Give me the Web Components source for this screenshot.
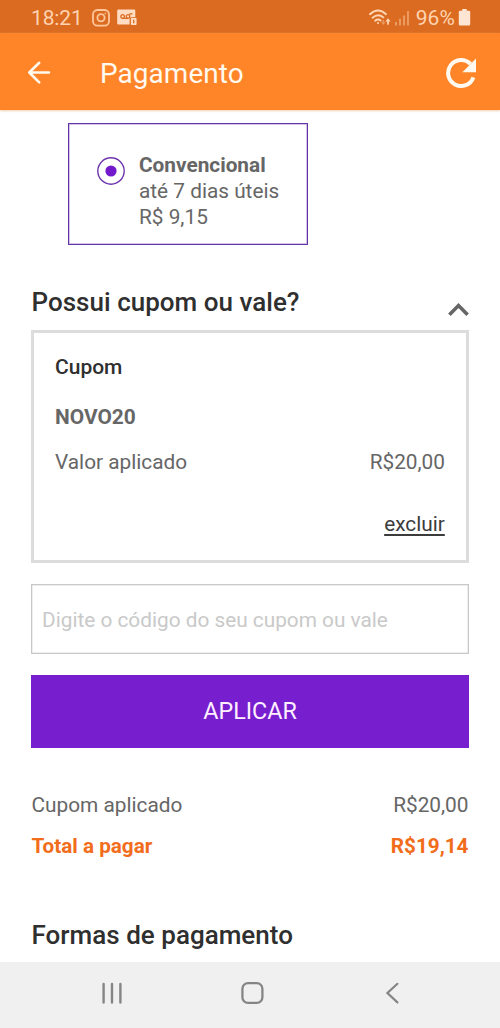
<!DOCTYPE html>
<html lang="pt-BR">
<head>
<meta charset="utf-8">
<title>Pagamento</title>
<style>
html,body{margin:0;height:100%}
body{font-family:Roboto,sans-serif;font-size:20.8px;line-height:24px;color:#666;background:#fff;overflow:hidden}
</style>
</head>
<body>
<payment-screen></payment-screen>
<script>
const define=(name,html)=>{
  const t=document.createElement('template');
  t.innerHTML=html;
  customElements.define(name,class extends HTMLElement{
    constructor(){super();this.attachShadow({mode:'open'}).append(t.content.cloneNode(true));}
  });
};

define('status-bar',`<style>
:host{display:flex;align-items:center;height:33px;box-sizing:border-box;padding:2px 29px 0 31px;background:#db6b20;color:#ffd3b0;font-size:21px;line-height:30px}
svg{display:block;flex:none}
.time{width:61px;letter-spacing:-.12px}
.mail{margin-left:7px}
.wifi{margin-left:auto}
.signal{margin-left:3px}
.level{margin-left:6px;letter-spacing:.1px}
.battery{margin-left:3px}
</style>
<span class="time">18:21</span>
<svg width="18" height="18" viewBox="0 0 18 18" fill="none" stroke="#ffc79c" stroke-width="1.8"><rect x="1" y="1" width="16" height="15.6" rx="4.4"/><circle cx="9" cy="8.8" r="3.6"/><circle cx="13.3" cy="4.5" r=".5" stroke-width="1"/></svg>
<svg class="mail" width="21" height="18" viewBox="0 0 21 18"><path d="M1.2 .6H17.3Q18.3 .6 18.3 1.6V8.2H14.2Q12.6 8.2 12.6 9.8V15.6H1.2Q.2 15.6.2 14.6V1.6Q.2 .6 1.2 .6Z" fill="#ffdcc2"/><g fill="none" stroke="#db6b20" stroke-width="1.3"><circle cx="5.6" cy="7.5" r="1.8"/><circle cx="11" cy="7.5" r="1.8"/><path d="M5.6 9.4H11M13 5.8V4.8H15.5"/></g><rect x="13.9" y="9" width="5.7" height="7" rx=".8" fill="#ffdcc2"/><path d="M16.7 10.8V14.2" stroke="#db6b20" stroke-width="1.3"/></svg>
<svg class="wifi" width="23" height="18" viewBox="0 0 23 18" fill="none" stroke="#ffd6b5" stroke-width="1.9" stroke-linecap="round"><path d="M2 5.2Q10 -2 18 5.2M4.6 8.7Q10 3.8 15.4 8.4M7.2 11.7Q10 9.4 12.6 11.5"/><circle cx="10" cy="14" r="1" fill="#ffd6b5" stroke="none"/><path d="M20 15V11.8" stroke-width="1.7"/><path d="M17.3 12.6 20 9.2 22.7 12.6Z" fill="#ffd6b5" stroke="none"/><path d="M15.3 11.5V14" stroke="#e99a62" stroke-width="1.3"/><path d="M13 13.3H17.5L15.3 16Z" fill="#e99a62" stroke="none"/></svg>
<svg class="signal" width="16" height="18" viewBox="0 0 16 18" fill="#eb9a62"><path d="M1 13h2v3.5H1zM5 9.8h2v6.7H5zM9 6.4h2v10.1H9zM13 2h2v14.5h-2z"/></svg>
<span class="level">96%</span>
<svg class="battery" width="13" height="18" viewBox="0 0 13 18"><path d="M4.2 0H8.7V1.7H11Q12.2 1.7 12.2 2.9V15.3Q12.2 16.5 11 16.5H2Q.8 16.5 .8 15.3V2.9Q.8 1.7 2 1.7H4.2Z" fill="#ffe6d4"/></svg>`);

define('app-bar',`<style>
:host{display:flex;align-items:center;height:77px;box-sizing:border-box;padding:2px 23px 0 27px;background:#ff8528;color:#fff9ef;box-shadow:0 1px 2px #f3cfae;position:relative}
svg{display:block;flex:none}
h1{margin:0 auto 0 49px;font-size:27.9px;font-weight:400;line-height:34px;padding-top:2px;letter-spacing:.1px}
</style>
<svg width="24" height="24" viewBox="0 0 24 24" fill="none" stroke="#fff9ef" stroke-width="2.6" stroke-linecap="round" stroke-linejoin="round"><path d="M22 11.5H2.5M12.2 1.8 2.3 11.5 12.2 21.4"/></svg>
<h1><slot></slot></h1>
<svg width="32" height="32" viewBox="0 0 32 32"><path d="M28.4 20.3A13 13 0 1 1 25.5 7" fill="none" stroke="#fff9ef" stroke-width="4"/><path d="M31 1.6V15.2H17.4Z" fill="#fff9ef"/></svg>`);

define('shipping-option',`<style>
:host{display:flex;width:240px;height:122px;box-sizing:border-box;border:1px solid #6232a6;box-shadow:inset 0 0 0 .5px #a98cd0;padding:28px 0 0 28px;line-height:26px}
svg{display:block;flex:none;margin:5px 14px 0 0}
</style>
<svg width="28" height="28" viewBox="0 0 28 28"><circle cx="14" cy="14" r="13.2" fill="none" stroke="#6e35ad" stroke-width="1.4"/><circle cx="14" cy="14" r="5.6" fill="#7219cb"/></svg>
<div><slot></slot></div>`);

define('section-title',`<style>
:host{display:flex;justify-content:space-between;font-size:26px;font-weight:500;line-height:30px;color:#2f2f2f;letter-spacing:.02px}
::slotted(span){padding-left:.5px}
</style><slot></slot><slot name="action"></slot>`);

define('chevron-up',`<style>:host{display:block;margin-top:15px}svg{display:block}</style>
<svg width="21" height="15" viewBox="0 0 21 15" fill="none" stroke="#666" stroke-width="3.6"><path d="M1.4 12.8 10.5 3.6 19.6 12.8"/></svg>`);

define('amount-row',`<style>:host{display:flex;justify-content:space-between;padding:0 .5px}</style><slot></slot><slot name="value"></slot>`);

define('coupon-card',`<style>
:host{display:flex;flex-direction:column;height:233px;box-sizing:border-box;border:3px solid #dcdcdc;padding:22px 20.5px 0 20.5px}
h3{margin:0 0 26px .5px;font-size:21px;font-weight:500;line-height:24px;color:#2f2f2f}
strong{font-weight:700;font-size:20.9px;margin:0 0 21px .5px}
a{align-self:flex-end;margin:38px .7px 0 0;color:#3c3c3c;text-decoration:underline;text-decoration-thickness:1.5px;text-underline-offset:3px}
</style>
<h3>Cupom</h3><strong><slot name="code"></slot></strong><slot></slot><a>excluir</a>`);

define('coupon-field',`<style>
:host{display:flex;align-items:center;height:70px;box-sizing:border-box;border:1px solid #c8c8c8;box-shadow:inset 0 0 0 .5px #ddd;padding:2px 0 0 10px;color:#c9c9c9}
</style><slot></slot>`);

define('action-button',`<style>
:host{display:flex}
button{flex:1;height:73px;border:0;padding:0 0 2px;background:#771ecf;color:#fff0ff;font:400 23.3px/28px Roboto,sans-serif}
</style><button><slot></slot></button>`);

define('nav-bar',`<style>
:host{display:flex;align-items:center;justify-content:space-between;height:66px;box-sizing:border-box;padding:0 99px 4px 101px;background:#f0f0f0}
svg{display:block}
</style>
<svg width="22" height="24" viewBox="0 0 22 24" stroke="#858585" stroke-width="2.4" stroke-linecap="round"><path d="M2.6 3V21.5M11 3V21.5M19.4 3V21.5"/></svg>
<svg width="24" height="24" viewBox="0 0 24 24"><rect x="1.4" y="2.1" width="20" height="19.8" rx="5.6" fill="none" stroke="#858585" stroke-width="2.3"/></svg>
<svg width="18" height="24" viewBox="0 0 18 24" fill="none" stroke="#858585" stroke-width="2.2" stroke-linecap="round"><path d="M14.4 2.8 4.4 12 14.4 21.4"/></svg>`);

define('payment-screen',`<style>
:host{display:flex;flex-direction:column;height:1028px;width:500px}
main{flex:1;padding:13px 31px 0;min-height:0}
b{display:block}
shipping-option{margin-left:37px}
section-title{margin-top:42px}
coupon-card{margin-top:13px}
coupon-field{margin-top:21px}
action-button{margin:21px 0 45px}
.total{margin:17px 0 62px;color:#f26d1b;font-weight:700;font-size:20.7px}
.last{margin-top:0}
</style>
<status-bar></status-bar>
<app-bar>Pagamento</app-bar>
<main>
<shipping-option><b>Convencional</b>até 7 dias úteis<br>R$ 9,15</shipping-option>
<section-title><span>Possui cupom ou vale?</span><chevron-up slot="action"></chevron-up></section-title>
<coupon-card><span slot="code">NOVO20</span><amount-row><span>Valor aplicado</span><span slot="value">R$20,00</span></amount-row></coupon-card>
<coupon-field>Digite o código do seu cupom ou vale</coupon-field>
<action-button>APLICAR</action-button>
<amount-row><span>Cupom aplicado</span><span slot="value">R$20,00</span></amount-row>
<amount-row class="total"><span>Total a pagar</span><span slot="value">R$19,14</span></amount-row>
<section-title class="last"><span>Formas de pagamento</span></section-title>
</main>
<nav-bar></nav-bar>`);
</script>
</body>
</html>
